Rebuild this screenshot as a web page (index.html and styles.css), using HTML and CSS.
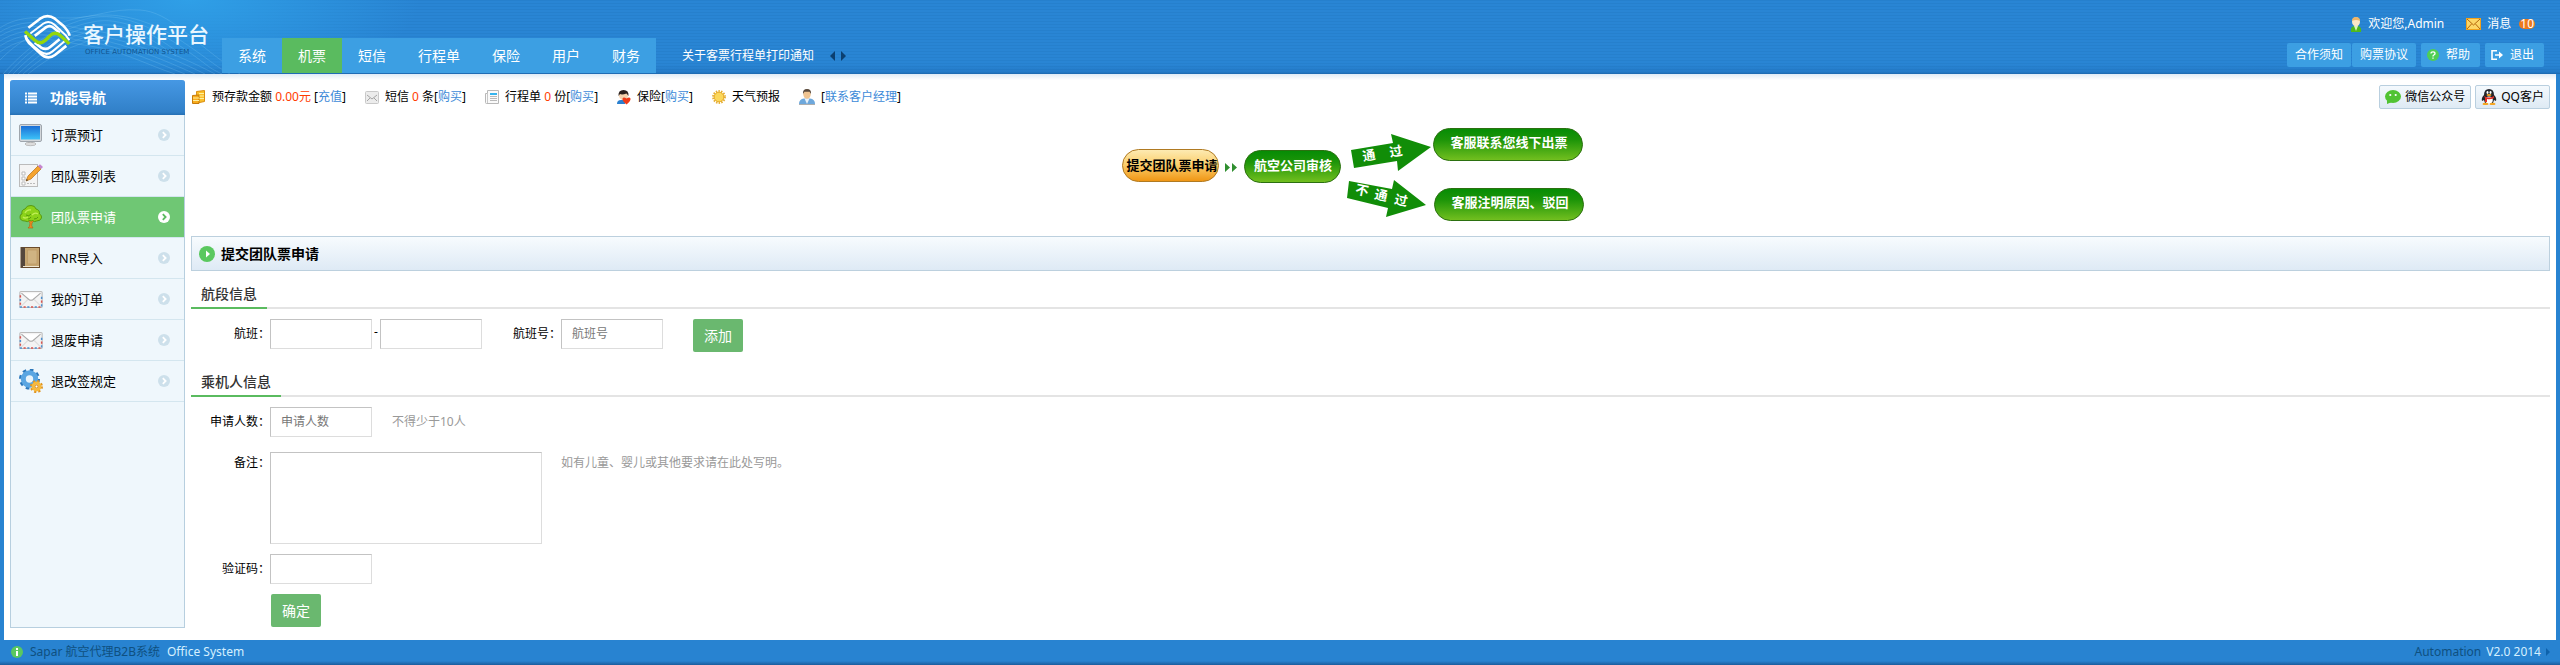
FILE: index.html
```html
<!DOCTYPE html>
<html lang="zh-CN">
<head>
<meta charset="utf-8">
<title>客户操作平台</title>
<link rel="stylesheet" href="styles.css">
</head>
<body>
<svg class="defs" width="0" height="0" aria-hidden="true">
  <defs>
    <linearGradient id="screen" x1="0" y1="0" x2="0" y2="1"><stop offset="0" stop-color="#1b6fd6"/><stop offset="1" stop-color="#3cc3f8"/></linearGradient>
    <linearGradient id="gold" x1="0" y1="0" x2="0" y2="1"><stop offset="0" stop-color="#fdebb4"/><stop offset=".45" stop-color="#fbd070"/><stop offset="1" stop-color="#f09512"/></linearGradient>
    <linearGradient id="leaf" x1="0" y1="0" x2="0" y2="1"><stop offset="0" stop-color="#058c05"/><stop offset=".35" stop-color="#1c9408"/><stop offset="1" stop-color="#74c020"/></linearGradient>
    <symbol id="go" viewBox="0 0 12 12"><circle cx="6" cy="6" r="6" fill="currentColor"/><path d="M4.8 3.2 7.6 6 4.8 8.800" fill="none" stroke="var(--tick)" stroke-width="1.8"/></symbol>
    <symbol id="letter" viewBox="0 0 22 16"><rect x=".5" y=".5" width="21" height="15" rx="1" fill="#f3f3f3" stroke="#bbb"/><path d="M1 4v11h20V4" fill="none" stroke="#d9534f" stroke-width="1.4" stroke-dasharray="2 5"/><path d="M1 4v11h20V4" fill="none" stroke="#4b8fd0" stroke-width="1.4" stroke-dasharray="2 5" stroke-dashoffset="3.5"/><path d="M2 14l6-6M20 14l-6-6" stroke="#ddd"/><path d="M2 2l7 6q2 1.400 4 0l7-6" fill="#fff" stroke="#aaa"/></symbol>
  </defs>
</svg>

<header class="header">
  <svg class="waves" viewBox="0 0 260 74" aria-hidden="true">
    <g fill="none" stroke="#8fd0f5" stroke-opacity=".28" stroke-width=".8">
      <path d="M0 28C20 14 45 18 70 18S110 8 140 10 190 40 240 74"/><path d="M0 32C30 14 60 26 90 30S170 50 215 74"/>
      <path d="M0 36C30 18 60 30 90 34S165 54 205 74"/><path d="M0 41C30 22 60 34 90 38S160 58 195 74"/>
      <path d="M0 46C30 26 60 38 90 42S155 62 185 74"/><path d="M0 52C30 30 60 42 90 46S150 66 175 74"/>
      <path d="M0 60C25 34 60 20 90 16S150 20 180 40 215 66 230 74"/><path d="M3 74C30 44 60 24 90 18S150 26 180 46 205 66 222 74"/>
      <path d="M8 74C35 44 62 28 92 22S150 32 178 52"/><path d="M13 74C40 46 65 32 94 26S150 38 176 56"/><path d="M18 74C45 48 68 36 96 30"/><path d="M23 74C48 52 70 40 98 34"/><path d="M28 74C50 56 74 44 100 38"/>
    </g>
  </svg>
  <a class="brand" href="#">
    <svg class="brand-mark" viewBox="74 41 140 140" aria-hidden="true">
      <g fill="none" stroke="#fff" stroke-width="8">
        <path d="M87 82 122 55Q144 39 166 55L190 75Q207 92 210 106"/>
        <path d="M93 99 131 70Q148 59 164 72L184 91Q200 104 209 119" stroke-width="6"/>
        <path d="M106 106 139 81Q150 73 162 82L180 97" stroke-width="8"/>
        <path d="M78 104Q82 122 94 132L122 158Q144 180 166 163L200 136" stroke-width="8"/>
        <path d="M79 112Q90 124 104 138L124 154Q142 166 158 153L195 122" stroke-width="6"/>
        <path d="M106 126 125 141Q140 150 152 139L180 116" stroke-width="8"/>
      </g>
      <path d="M77 93 106 119Q121 134 137 120L151 106Q166 91 183 106L209 130" fill="none" stroke="#94d60a" stroke-width="10"/>
    </svg>
    <span class="brand-text"><span class="brand-name">客户操作平台</span><span class="brand-sub">OFFICE AUTOMATION SYSTEM</span></span>
  </a>
  <nav class="tabs">
    <a href="#">系统</a><a class="active" href="#">机票</a><a href="#">短信</a><a href="#">行程单</a><a href="#">保险</a><a href="#">用户</a><a href="#">财务</a>
  </nav>
  <div class="notice">
    <a href="#">关于客票行程单打印通知</a>
    <button type="button" class="arrow" aria-label="上一条"><svg width="5" height="10" viewBox="0 0 5 10"><path d="M5 0v10L0 5z" fill="#0b3f70"/></svg></button>
    <button type="button" class="arrow" aria-label="下一条"><svg width="5" height="10" viewBox="0 0 5 10"><path d="M0 0v10l5-5z" fill="#0b3f70"/></svg></button>
  </div>
  <div class="account">
    <div class="account-info">
      <span class="user"><svg width="12" height="15" viewBox="0 0 12 15"><path d="M1 15q-1-5 3-6h4q4 1 3 6z" fill="#4fb81c"/><path d="M4 9h4l-2 5z" fill="#d8f5c0"/><ellipse cx="6" cy="4.800" rx="4" ry="4.500" fill="#fbe7c6"/><path d="M2 4q0-4 4-4t4 4q-4-2-8 0z" fill="#f0b668"/></svg>欢迎您,Admin</span>
      <a class="message" href="#"><svg width="15" height="12" viewBox="0 0 15 12"><rect x=".5" y=".5" width="14" height="11" fill="#fcd667" stroke="#f0a11c"/><path d="M1 1l6.500 6L14 1M1 11l4.500-5M14 11 9.500 6" fill="none" stroke="#b4660a"/></svg>消息<span class="badge">10</span></a>
    </div>
    <div class="account-links">
      <a href="#">合作须知</a><a href="#">购票协议</a>
      <a class="with-icon" href="#"><svg width="12" height="12" viewBox="0 0 12 12"><circle cx="6" cy="6" r="6" fill="#4fcf54"/><path d="M4 4.600Q4 2.800 6 2.800t2 1.600Q8 5.400 6.800 6 6 6.500 6 7.400M6 8.500v1.300" fill="none" stroke="#fff" stroke-width="1.300"/></svg>帮助</a>
      <a class="with-icon" href="#"><svg width="12" height="12" viewBox="0 0 12 12"><path d="M6 1.800H1v8.500h5M4 6h6" fill="none" stroke="#fff" stroke-width="1.600"/><path d="M8 2.600 12 6 8 9.400z" fill="#fff"/></svg>退出</a>
    </div>
  </div>
</header>

<div class="frame">
  <aside class="sidebar">
    <h2 class="sidebar-title"><svg width="12" height="12" viewBox="0 0 12 12"><path d="M0 1.500h2M0 4.500h2M0 7.500h2M0 10.500h2M3 1.500h9M3 4.500h9M3 7.500h9M3 10.500h9" stroke="#fff" stroke-width="2"/></svg>功能导航</h2>
    <a class="side-item" href="#"><svg class="side-icon" viewBox="0 0 24 24"><rect x=".5" y="1.500" width="22" height="17" rx="1.500" fill="#d3d7db" stroke="#9fa6ad"/><rect x="2" y="3" width="19" height="13.500" fill="url(#screen)"/><path d="M9 19h5v2H9z" fill="#bbb"/><ellipse cx="11.500" cy="21" rx="5.500" ry="1.700" fill="#ddd" stroke="#aaa" stroke-width=".7"/></svg><span>订票预订</span><svg class="go"><use href="#go"/></svg></a>
    <a class="side-item" href="#"><svg class="side-icon" viewBox="0 0 24 24"><rect x=".5" y=".5" width="18" height="22" fill="#f4f4f4" stroke="#bbb"/><path d="M3 8h3v3H3zM3 13h3v3H3zM3 18h3v3H3z" fill="#fff" stroke="#bbb"/><path d="M8 19.500h8M8 14h4" stroke="#bbb" stroke-dasharray="2 1"/><path d="M7 17 9 12 19 2l3 3L12 15z" fill="#f5a32e" stroke="#b5701a" stroke-width=".7"/><path d="M19 2l2-1.800 3 2.800-2 2z" fill="#c685cf"/><path d="M7 17l.8-2 1.200 1.200z" fill="#333"/></svg><span>团队票列表</span><svg class="go"><use href="#go"/></svg></a>
    <a class="side-item active" href="#"><svg class="side-icon" viewBox="0 0 24 24"><path d="M8 13l3 5q0 4-2 5h5q-2-2-1-5l4-5z" fill="#ec8a22" stroke="#b35c0d" stroke-width=".6"/><path d="M6 16q-5 0-5-4 0-3 2-3-1-4 3-5Q8 0 12 .5q4 0 5 3.500 4 1 3.500 5 2.500 1 2 4-1 3-5 3-2 1.500-4-.5-1 1-3 0-2 2-4.500.5z" fill="#8cd21a" stroke="#4c8c08" stroke-width=".8"/><path d="M6 8q2-4 6-3M13 10q3-3 6-1M4 12q2 2 5 0" fill="none" stroke="#c1ee55" stroke-width="1.300"/><path d="M9 14q2 0 3-2M7 10q3 2 5-1M15 14q3 0 4-2" fill="none" stroke="#55990c"/></svg><span>团队票申请</span><svg class="go"><use href="#go"/></svg></a>
    <a class="side-item" href="#"><svg class="side-icon" viewBox="0 0 24 24"><rect x="2" y="1.500" width="18.500" height="20" fill="#c6a671" stroke="#6c4c2b"/><path d="M2 1.500h4v20H2z" fill="#54473d"/><path d="M8.500 4h9.500v14H8.500z" fill="#d0b382" stroke="#b8965f" stroke-width=".6"/><path d="M4 20.500h16" stroke="#f1e6cf"/></svg><span>PNR导入</span><svg class="go"><use href="#go"/></svg></a>
    <a class="side-item" href="#"><svg class="side-icon mail"><use href="#letter"/></svg><span>我的订单</span><svg class="go"><use href="#go"/></svg></a>
    <a class="side-item" href="#"><svg class="side-icon mail"><use href="#letter"/></svg><span>退废申请</span><svg class="go"><use href="#go"/></svg></a>
    <a class="side-item" href="#"><svg class="side-icon" viewBox="0 0 24 24"><circle cx="10.500" cy="10" r="8.500" fill="none" stroke="#2c77ba" stroke-width="4" stroke-dasharray="3.340 3.340"/><circle cx="10.500" cy="10" r="6.200" fill="#e8f4fb" stroke="#5aa6e2" stroke-width="5"/><circle cx="17.500" cy="17.500" r="5" fill="none" stroke="#df9420" stroke-width="3" stroke-dasharray="2 1.930"/><circle cx="17.500" cy="17.500" r="3.400" fill="#fff3cf" stroke="#f8b93c" stroke-width="3"/><circle cx="17.500" cy="17.500" r="1.500" fill="#fff" stroke="#d18414"/></svg><span>退改签规定</span><svg class="go"><use href="#go"/></svg></a>
  </aside>

  <main class="content">
    <div class="toolbar">
      <ul class="stats">
        <li><svg width="14" height="14" viewBox="0 0 14 14"><path d="M4.500 1.500 12.500.5v11L5 13z" fill="#fbc02a" stroke="#d98d10"/><path d="M.5 5.500 7 5v8.500H.5z" fill="#f8ac1c" stroke="#c57a0b"/><path d="M1 8h6M1 10.500h6M7 3.500h5M7.500 6H12M7.500 8.500H12" stroke="#fff0a0"/></svg><span>预存款金额 <b>0.00元</b> [<a href="#">充值</a>]</span></li>
        <li><svg width="14" height="13" viewBox="0 0 14 13"><rect x=".5" y=".5" width="13" height="12" rx="1" fill="#ececec" stroke="#c9c9c9"/><path d="M2 4l5 4 5-4M2 10l3-3M12 10 9 7" fill="none" stroke="#a5a5a5"/></svg><span>短信 <b>0</b> 条[<a href="#">购买</a>]</span></li>
        <li><svg width="14" height="14" viewBox="0 0 14 14"><path d="M2.500.5h11v13h-12q-1 0-1-1v-9h2z" fill="#fafafa" stroke="#b8b8b8"/><path d="M2.500 3v10" stroke="#c8c8c8"/><path d="M5 4h7" stroke="#35b4ee" stroke-width="2"/><path d="M5 6.500h7M5 8.500h7M5 10.500h7" stroke="#b9b9b9"/></svg><span>行程单 <b>0</b> 份[<a href="#">购买</a>]</span></li>
        <li><svg width="14" height="15" viewBox="0 0 14 15"><path d="M0 14q0-4 4-4h4v4z" fill="#2a80d0"/><circle cx="6.500" cy="5.500" r="4.500" fill="#f5d2ac"/><path d="M1.500 6Q1 0 6.500 0 12 0 11.500 6L9.500 3.500Q5 5 3 4z" fill="#2c211e"/><path d="M9.500 14.500Q5 11 5.500 8.500 6.500 6.500 9.500 8.500 12.500 6.500 13.500 8.500 14 11 9.500 14.500z" fill="#ee3a18"/></svg><span>保险[<a href="#">购买</a>]</span></li>
        <li><svg width="14" height="14" viewBox="0 0 14 14"><circle cx="7" cy="7" r="5.700" fill="none" stroke="#e5ae32" stroke-width="2.400" stroke-dasharray="1.400 1.160"/><circle cx="7" cy="7" r="4.800" fill="#fbd75a" stroke="#e8ac28"/></svg><span>天气预报</span></li>
        <li><svg width="16" height="16" viewBox="0 0 16 16"><path d="M0 15q0-5 5-5.500h6q5 .5 5 5.500z" fill="#6ea8dc"/><path d="M5.500 9.500h5L8 15z" fill="#e8f1fa"/><ellipse cx="8" cy="5.200" rx="3.700" ry="4.600" fill="#f0c491"/><path d="M4 5Q3.500 0 8 0t4 5l-1.500-2.200h-5z" fill="#59493c"/><path d="M0 15.500h16" stroke="#999" stroke-width=".8"/></svg><span>[<a href="#">联系客户经理</a>]</span></li>
      </ul>
      <div class="contacts">
        <button type="button" class="contact"><svg width="16" height="14" viewBox="0 0 16 14"><ellipse cx="8" cy="6.500" rx="8" ry="6.500" fill="#51c332"/><path d="M2 10l0 4 5-2z" fill="#51c332"/><circle cx="5.300" cy="5" r="1.100" fill="#fff"/><circle cx="10.700" cy="5" r="1.100" fill="#fff"/></svg>微信公众号</button>
        <button type="button" class="contact"><svg width="16" height="16" viewBox="0 0 16 16"><path d="M3 6Q3 0 8 0t5 6q3 3 2 6l-2-1-1 3H4l-1-3-2 1q-1-3 2-6z" fill="#23252b"/><ellipse cx="8" cy="11" rx="3.800" ry="3.500" fill="#fff"/><ellipse cx="4.500" cy="15" rx="3" ry="1.200" fill="#f5a623"/><ellipse cx="11.500" cy="15" rx="3" ry="1.200" fill="#f5a623"/><ellipse cx="6.500" cy="3.500" rx="1" ry="1.400" fill="#fff"/><ellipse cx="9.500" cy="3.500" rx="1" ry="1.400" fill="#fff"/><ellipse cx="8" cy="6" rx="2.500" ry="1" fill="#f5a623"/><path d="M3 7q5 3 10 0v2q-4 2-7 1v3H4V9z" fill="#e22b22"/></svg>QQ客户</button>
      </div>
    </div>

    <svg class="flow" viewBox="11 3 500 116" role="img" aria-label="团队票申请流程">
      <rect x="12.500" y="34.500" width="96" height="32" rx="16" fill="url(#gold)" stroke="#b07a22"/>
      <rect x="134.500" y="35.500" width="96" height="32" rx="16" fill="url(#leaf)" stroke="#2b7010"/>
      <rect x="323.500" y="13.500" width="149" height="32" rx="16" fill="url(#leaf)" stroke="#2b7010"/>
      <rect x="324.500" y="73.500" width="149" height="32" rx="16" fill="url(#leaf)" stroke="#2b7010"/>
      <path d="M115 48v9l5-4.500zM122 48v9l5-4.500z" fill="#2f8f2f"/>
      <path d="M241 35 283 28 281 19 321 32 288 56 287 46 244 53z" fill="#118d08"/>
      <path d="M239 66 282 74 284 65 316 90 276 102 278 93 237 83z" fill="#118d08"/>
      <g class="flow-text">
        <text x="62" y="55" fill="#000">提交团队票申请</text>
        <text x="183" y="55">航空公司审核</text>
        <text x="399" y="32">客服联系您线下出票</text>
        <text x="400" y="92">客服注明原因、驳回</text>
        <text x="259" y="45" transform="rotate(-9 259 41)">通</text><text x="286" y="41" transform="rotate(-9 286 37)">过</text>
        <text x="252" y="80" transform="rotate(12 252 76)">不</text><text x="271" y="85" transform="rotate(12 271 81)">通</text><text x="291" y="90" transform="rotate(12 291 86)">过</text>
      </g>
    </svg>

    <h1 class="page-title"><svg width="16" height="16" viewBox="0 0 16 16"><circle cx="8" cy="8" r="8" fill="#5ac85f"/><path d="M7 4.500v7L11 8z" fill="#fff"/></svg>提交团队票申请</h1>

    <form class="form">
      <h2 class="section-title"><span>航段信息</span></h2>
      <div class="row">
        <label class="label" for="from">航班：</label><input id="from" type="text"><span class="dash">-</span><input type="text" aria-label="到达">
        <label class="label-inline" for="flight">航班号：</label><input id="flight" type="text" placeholder="航班号">
        <button type="button" class="btn add">添加</button>
      </div>
      <h2 class="section-title second"><span>乘机人信息</span></h2>
      <div class="row people">
        <label class="label" for="count">申请人数：</label><input id="count" type="text" placeholder="申请人数"><span class="hint">不得少于10人</span>
      </div>
      <div class="row remark">
        <label class="label" for="note">备注：</label><textarea id="note"></textarea><span class="hint">如有儿童、婴儿或其他要求请在此处写明。</span>
      </div>
      <div class="row captcha">
        <label class="label" for="code">验证码：</label><input id="code" type="text">
      </div>
      <div class="submit"><button type="button" class="btn">确定</button></div>
    </form>
  </main>
</div>

<footer class="footer">
  <div class="foot-left"><svg width="12" height="12" viewBox="0 0 12 12"><circle cx="6" cy="6" r="6" fill="#5ac85f"/><path d="M6 2v2M6 5v5" stroke="#fff" stroke-width="2"/></svg><span>Sapar 航空代理B2B系统</span><span class="bright">Office System</span></div>
  <div class="foot-right"><span>Automation</span> <span class="bright">V2.0 2014</span><svg width="4" height="8" viewBox="0 0 4 8"><path d="M0 0v8l4-4z" fill="#0d62ac"/></svg></div>
</footer>
</body>
</html>
```

FILE: styles.css
```css
* { box-sizing: border-box; }
body {
  margin: 0;
  min-height: 100vh;
  display: flex;
  flex-direction: column;
  background: #2883d1;
  color: #000;
  font: 12px/18px "Noto Sans", "Noto Sans CJK SC", sans-serif;
}
a { color: inherit; text-decoration: none; }
svg { flex: none; }
h1, h2, ul { margin: 0; padding: 0; }
button, input, textarea { font: inherit; }
.defs { position: absolute; }

.header {
  position: relative;
  height: 74px;
  display: flex;
  align-items: flex-end;
  border-bottom: 1px solid #1e6cb4;
  background:
    linear-gradient(to bottom, transparent 64px, rgba(10, 70, 140, .2) 74px),
    radial-gradient(ellipse 230px 90px at 190px 0, #2f9fe7, rgba(47, 159, 231, 0)),
    repeating-linear-gradient(to bottom, #2680cd 0 1px, #2985d4 1px 3px);
}
.waves { position: absolute; left: 0; top: 0; width: 260px; height: 74px; }
.brand {
  position: relative;
  width: 222px;
  height: 73px;
  padding: 14px 0 0 24px;
  display: flex;
  align-items: flex-start;
  gap: 12px;
  color: #fff;
}
.brand-mark { width: 47px; height: 47px; }
.brand-text { display: flex; flex-direction: column; padding-top: 7px; }
.brand-name { font: 500 21px/24px "Noto Sans CJK SC", sans-serif; color: #eaf7ff; }
.brand-sub { padding-left: 2px; font: 7px/14px "DejaVu Sans", sans-serif; color: #125590; white-space: nowrap; }
.tabs { position: relative; display: flex; background: #3c9fe3; }
.tabs a { padding: 0 16px; font-size: 14px; line-height: 35px; color: #fff; }
.tabs .active { background: #5abb5f; }
.notice { display: flex; align-items: center; gap: 6px; height: 35px; padding-left: 26px; color: #fff; }
.notice a { margin-right: 10px; }
.arrow { display: flex; padding: 0; border: 0; background: none; }
.account { margin-left: auto; padding: 0 16px 6px 0; color: #fff; }
.account-info { display: flex; justify-content: flex-end; gap: 22px; padding: 0 9px 10px 0; }
.user, .message { display: flex; align-items: center; gap: 6px; }
.badge { margin-left: 2px; padding: 0 1px; border-radius: 5px; line-height: 10px; background: #ec7a1c; }
.account-links { display: flex; gap: 5px; }
.account-links a { padding: 0 8px; border-radius: 2px; line-height: 24px; background: #3c9fe3; }
.account-links a:first-child { margin-right: -4px; }
.account-links .with-icon { display: flex; align-items: center; gap: 7px; padding: 0 10px 0 6px; }

.frame {
  flex: 1;
  display: flex;
  gap: 6px;
  margin: 0 4px;
  padding: 6px 6px 12px;
  background: linear-gradient(to bottom, #dfebf6, #fff 6px);
}
.sidebar {
  width: 175px;
  flex: none;
  border: 1px solid #b7cfdf;
  border-top: 0;
  border-radius: 3px 3px 0 0;
  background: #eff7fc;
}
.sidebar-title {
  display: flex;
  align-items: center;
  gap: 13px;
  height: 35px;
  margin: 0 -1px;
  padding-left: 15px;
  border-radius: 3px 3px 0 0;
  background: linear-gradient(to bottom, #4698e4, #3180c8 32px, #2670b4);
  color: #fff;
  font-size: 14px;
}
.side-item {
  --tick: #fff;
  display: flex;
  align-items: center;
  height: 41px;
  padding: 0 14px 0 8px;
  border-bottom: 1px solid #d4e6ef;
  font-size: 13px;
}
.side-item span { flex: 1; margin-left: 8px; }
.side-item.active { --tick: #5abb5f; background: #6fc774; color: #fff; }
.side-icon { width: 24px; height: 24px; }
.side-icon.mail { height: 17px; }
.go { width: 12px; height: 12px; color: #cde0eb; }
.active .go { color: #fff; }

.content { flex: 1; min-width: 0; }
.toolbar { display: flex; justify-content: space-between; padding: 5px 0 0 1px; height: 38px; }
.stats { display: flex; gap: 19px; list-style: none; height: 24px; }
.stats li { display: flex; align-items: center; gap: 6px; white-space: nowrap; }
.stats a { color: #3d8ad8; }
.stats b { font-weight: 400; color: #ff3c00; }
.contacts { display: flex; gap: 4px; }
.contact {
  display: flex;
  align-items: center;
  gap: 4px;
  height: 24px;
  padding: 0 5px;
  border: 1px solid #b9cfdf;
  border-radius: 2px;
  background: linear-gradient(to bottom, #f4f9fd, #deeaf4);
}
.flow { display: block; width: 500px; height: 116px; margin: 0 auto 2px; }
.flow-text { fill: #fff; font: 700 13px "Noto Sans CJK SC", sans-serif; text-anchor: middle; }
.page-title {
  display: flex;
  align-items: center;
  gap: 6px;
  height: 35px;
  padding-left: 7px;
  border: 1px solid #bcd0de;
  background: linear-gradient(to bottom, #f7fbfe, #deeaf5);
  font-size: 14px;
}
.section-title { display: flex; margin-top: 10px; border-bottom: 2px solid #e4e4e4; font-size: 14px; font-weight: 500; color: #333; line-height: 26px; }
.section-title span { margin-bottom: -2px; padding: 0 10px; border-bottom: 2px solid #5abb5f; }
.section-title.second { margin-top: 17px; }
.row { display: flex; align-items: flex-start; padding-top: 10px; line-height: 30px; }
.row.remark { padding-top: 15px; line-height: 22px; }
.label { width: 79px; text-align: right; white-space: nowrap; }
.label-inline { margin-left: 31px; }
.dash { width: 8px; text-align: center; line-height: 26px; }
input, textarea {
  padding: 0 10px;
  border: 1px solid #ddd;
  border-top-color: #c3c3c3;
  border-left-color: #c3c3c3;
  background: #fff;
}
input { width: 102px; height: 30px; }
textarea { width: 272px; height: 92px; resize: none; }
::placeholder { color: #777; opacity: 1; }
.hint { margin-left: 20px; color: #999; }
.remark .hint { margin-left: 19px; }
.btn { width: 50px; height: 33px; padding: 0; border: 0; border-radius: 2px; background: #6ab86f; color: #fff; font-size: 14px; }
.btn.add { margin-left: 30px; }
.submit { display: flex; padding: 10px 0 0 80px; }

.footer {
  display: flex;
  justify-content: space-between;
  height: 25px;
  padding: 0 10px 2px 11px;
  background: linear-gradient(to bottom, #2883d1 21px, #1b5c9c);
  color: #0f5080;
}
.foot-left, .foot-right { display: flex; align-items: center; }
.foot-left { gap: 7px; }
.foot-right { gap: 5px; }
.bright { color: #d5f0ff; }
```
